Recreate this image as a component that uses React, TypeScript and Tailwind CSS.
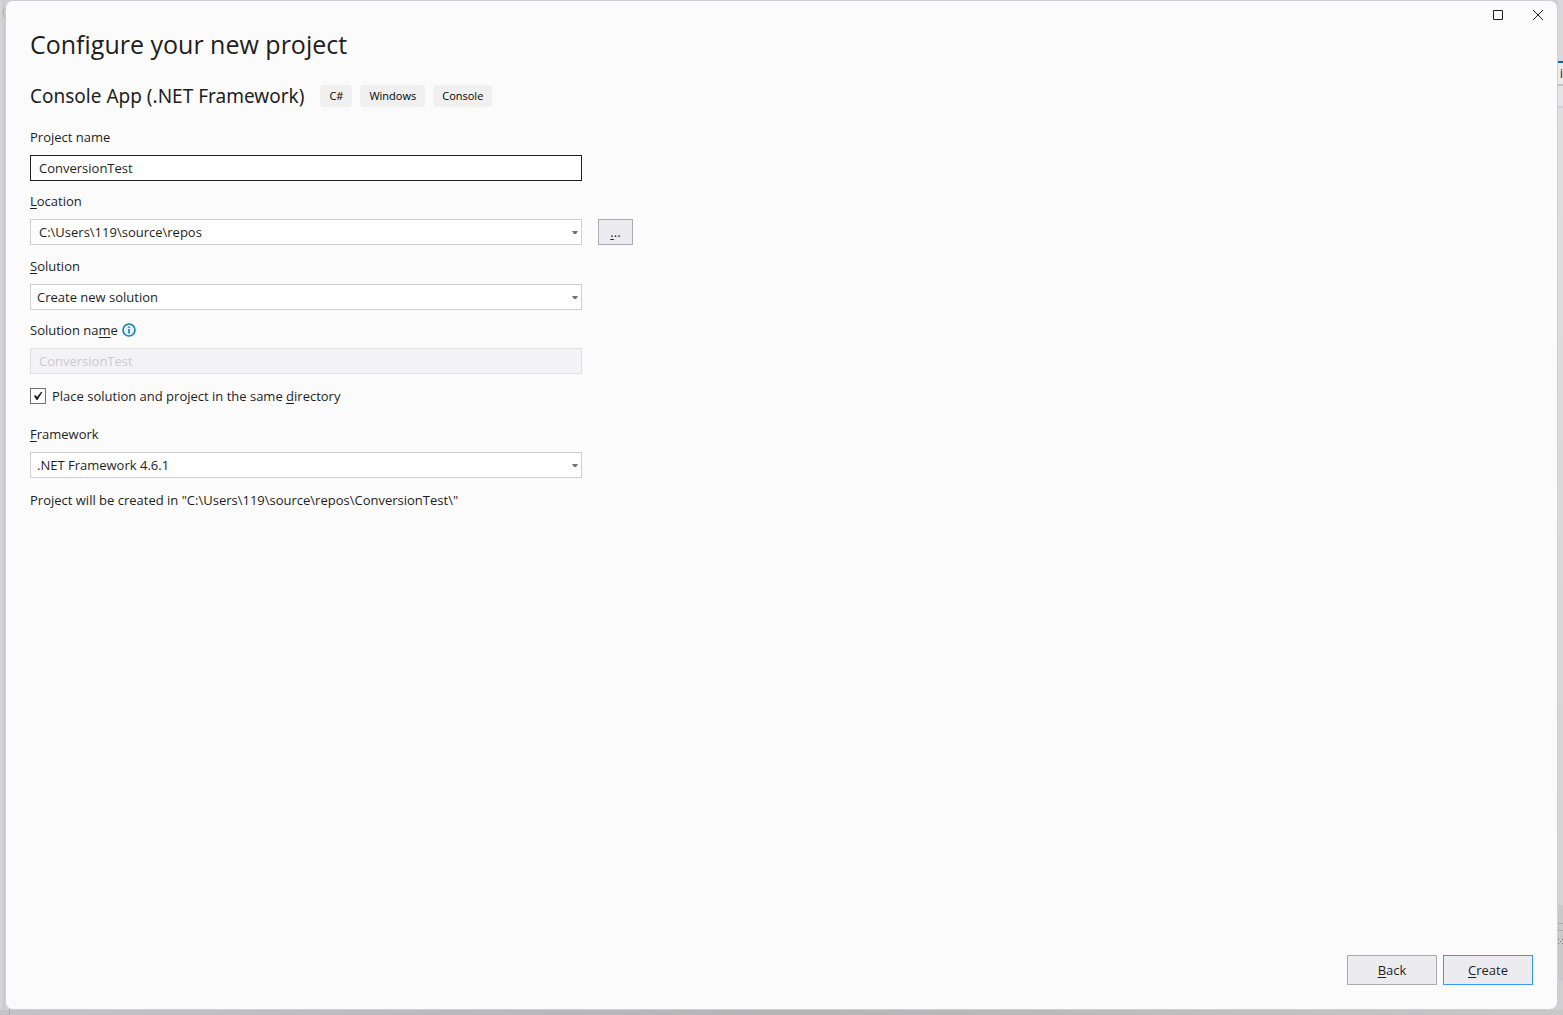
import { useState, type ReactNode } from "react";

function Key({ children }: { children: ReactNode }) {
  return <span className="underline underline-offset-2">{children}</span>;
}

function Tag({ children }: { children: ReactNode }) {
  return <li className="flex h-[22px] items-center rounded bg-[#f0f0f0] px-[9px] text-[11px] text-black">{children}</li>;
}

function Dropdown({ id, value, inset }: { id: string; value: string; inset: string }) {
  return (
    <div className="relative w-full max-w-[552px]">
      <select
        id={id}
        defaultValue={value}
        className={"h-[26px] w-full appearance-none border border-[#cccedb] bg-white pr-5 text-[13px] leading-5 outline-none " + inset}
      >
        <option>{value}</option>
      </select>
      <svg className="pointer-events-none absolute right-1 top-3 h-[3px] w-1.5" viewBox="0 0 6 3" aria-hidden="true">
        <path d="M0 0h6L4 3H2z" fill="#717171" />
      </svg>
    </div>
  );
}

function InfoIcon() {
  return (
    <svg className="size-[14px]" viewBox="0 0 14 14" role="img" aria-label="Information">
      <circle cx="7" cy="7" r="6" fill="#e3f1f6" stroke="#0f82a8" strokeWidth="1.6" />
      <path d="M7 6v4.5M7 3.5V5" stroke="#0f82a8" strokeWidth="1.6" />
    </svg>
  );
}

/* Slivers of the application that stays behind the dialog. */
function EdgeLeft() {
  return (
    <div className="w-[5px] shrink-0 overflow-hidden bg-linear-to-r from-[#d8d8da] to-[#c8c8ce]">
      <svg className="mt-1.5 h-3.5 w-1.5" viewBox="0 0 6 14" aria-hidden="true">
        <path d="M6 1a6.5 6.5 0 0 0 0 11" fill="none" stroke="#aaaab0" />
      </svg>
    </div>
  );
}

function EdgeRight() {
  return (
    <div className="flex w-[5px] shrink-0 flex-col overflow-hidden bg-[#d7d7d9]">
      <div className="h-[61px] shrink-0 bg-[#d9d9dc]" />
      <div className="flex h-[25px] shrink-0 justify-end border-b-2 border-t-2 border-b-[#c2c2cc] border-t-[#0a64b4] bg-[#ececee] text-[13px] leading-5 text-[#1e1e50]">
        i
      </div>
      <div className="h-[22px] shrink-0 border-b-2 border-[#d0d0d2] bg-[#e4e4e6]" />
      <div className="flex-1 bg-linear-to-b from-[#dfdfe0] to-[#d4d4d5]" />
      <div className="h-[76px] shrink-0 bg-[#c9c9cb] pt-[18px]">
        <div className="h-2 border-y border-[#a9a9b2]" />
        <svg className="mt-2 h-[5px] w-[5px]" viewBox="0 0 5 5" aria-hidden="true">
          <path d="M0 0h1v1H0zM4 0h1v1H4zM2 2h1v1H2zM0 4h1v1H0zM4 4h1v1H4z" fill="#77777b" />
        </svg>
      </div>
      <div className="h-[29px] shrink-0 bg-[#cfcfcf]" />
    </div>
  );
}

export default function App() {
  const [name, setName] = useState("ConversionTest");
  const [same, setSame] = useState(true);

  return (
    <div className="flex min-h-screen flex-col bg-[#c0c0c0] font-['Open_Sans','Noto_Sans',sans-serif] text-[13px] leading-5 text-[#1e1e1e]">
      <div className="flex flex-1 bg-[#d0d0d3]">
        <EdgeLeft />
        <main className="flex min-w-0 flex-1 flex-col rounded-lg border border-[#cccedb] bg-[#fbfbfb]">
          <header className="flex items-start justify-between pl-6 pr-[9px]">
            <h1 className="pt-[25px] text-[25px] leading-9">Configure your new project</h1>
            <div className="flex gap-5 pt-1">
              <button type="button" aria-label="Maximize" className="flex size-5 items-center justify-center">
                <svg className="size-[10px]" viewBox="0 0 10 10" aria-hidden="true">
                  <path d="M.5.5h9v9h-9z" fill="none" stroke="#1e1e1e" />
                </svg>
              </button>
              <button type="button" aria-label="Close" className="flex size-5 items-center justify-center">
                <svg className="size-[10px]" viewBox="0 0 10 10" aria-hidden="true">
                  <path d="M0 0l10 10M10 0L0 10" fill="none" stroke="#1e1e1e" />
                </svg>
              </button>
            </div>
          </header>

          <form className="flex flex-1 flex-col px-6 pb-6" onSubmit={(e) => e.preventDefault()}>
            <div className="mt-5 flex items-center gap-4">
              <h2 className="font-['Noto_Sans',sans-serif] text-[19px] leading-7">Console App (.NET Framework)</h2>
              <ul className="flex gap-2">
                <Tag>C#</Tag>
                <Tag>Windows</Tag>
                <Tag>Console</Tag>
              </ul>
            </div>

            <label htmlFor="project" className="mb-2 mt-[17px]">Project name</label>
            <input
              id="project"
              value={name}
              onChange={(e) => setName(e.target.value)}
              className="h-[26px] w-full max-w-[552px] border border-[#1e1e1e] bg-white px-2 pb-px outline-none"
            />

            <label htmlFor="location" className="mb-2 mt-2.5">
              <Key>L</Key>ocation
            </label>
            <div className="flex gap-4">
              <Dropdown id="location" value="C:\Users\119\source\repos" inset="pl-2" />
              <button type="button" aria-label="Browse" className="h-[26px] w-[35px] shrink-0 border border-[#acacac] bg-[#ececf0]">
                <Key>.</Key>..
              </button>
            </div>

            <label htmlFor="solution" className="mb-2 mt-[11px]">
              <Key>S</Key>olution
            </label>
            <Dropdown id="solution" value="Create new solution" inset="pl-1.5" />

            <div className="mb-2 mt-2.5 flex items-center gap-1">
              <label htmlFor="solution-name">
                Solution na<Key>m</Key>e
              </label>
              <InfoIcon />
            </div>
            <input
              id="solution-name"
              value={name}
              disabled
              className="h-[26px] w-full max-w-[552px] border border-[#dfdfe6] bg-[#f3f3f5] px-2 pb-px text-[#cacacd]"
            />

            <label className="mt-3 flex items-center gap-1.5">
              <span className="relative flex size-4">
                <input
                  type="checkbox"
                  checked={same}
                  onChange={(e) => setSame(e.target.checked)}
                  className="peer size-4 appearance-none border border-[#717171] bg-[#fefefe]"
                />
                <svg className="pointer-events-none absolute inset-0 hidden size-4 peer-checked:block" viewBox="0 0 16 16" aria-hidden="true">
                  <path d="M4 8l1.5-1L7 9l4-5h1.5L7.5 12H6.5z" fill="#1e1e1e" />
                </svg>
              </span>
              <span>
                Place solution and project in the same <Key>d</Key>irectory
              </span>
            </label>

            <label htmlFor="framework" className="mb-2 mt-[18px]">
              <Key>F</Key>ramework
            </label>
            <Dropdown id="framework" value=".NET Framework 4.6.1" inset="pl-1.5" />

            <p className="mt-3">Project will be created in "C:\Users\119\source\repos\{name}\"</p>

            <div className="mt-auto flex justify-end gap-1.5">
              <button type="button" className="h-[30px] w-[90px] border border-[#acacac] bg-[#ececf0]">
                <Key>B</Key>ack
              </button>
              <button type="submit" className="h-[30px] w-[90px] border border-[#3399ff] bg-[#ececf0]">
                <Key>C</Key>reate
              </button>
            </div>
          </form>
        </main>
        <EdgeRight />
      </div>
      <div className="flex h-[5px] bg-linear-to-r from-[#c4c4c6] via-[#b4b4b5] to-[#c8c8c8]">
        <div className="w-[10px] border-r border-[#aaaab4]" />
      </div>
    </div>
  );
}
